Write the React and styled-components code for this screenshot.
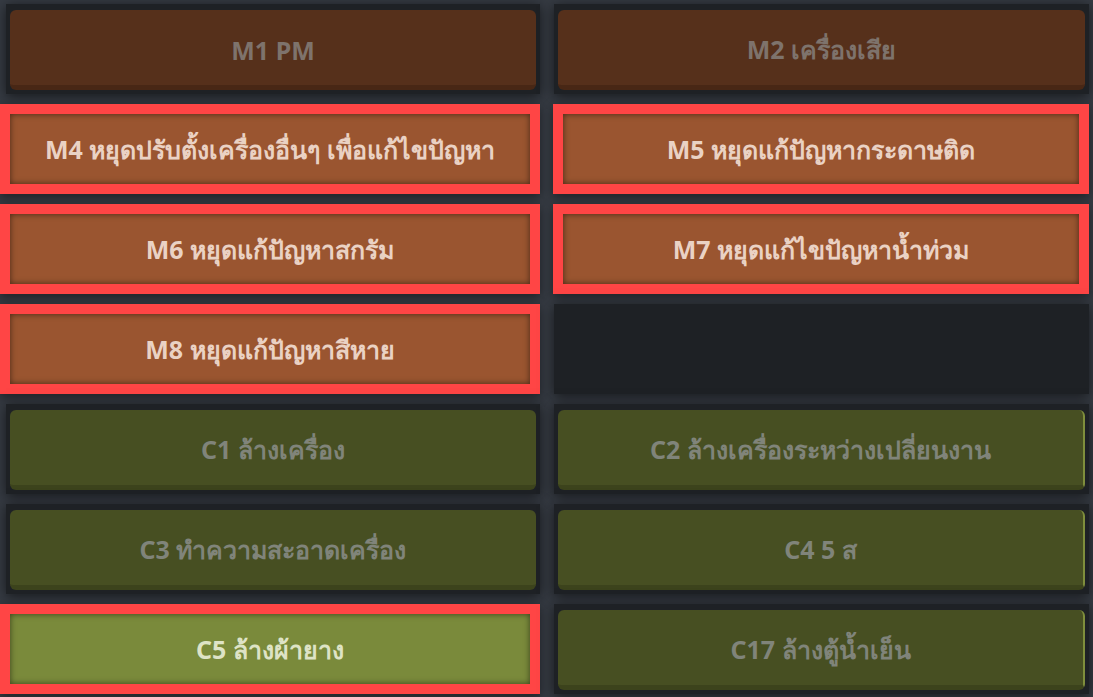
import React from 'react';
import styled, { createGlobalStyle } from 'styled-components';

const GlobalStyle = createGlobalStyle`
  html, body {
    margin: 0;
    padding: 0;
    background: #363b43;
  }
  body {
    font-family: "Noto Sans", "Open Sans", "DejaVu Sans", sans-serif;
    overflow: hidden;
  }
`;

const tasks = [
  { code: 'M1 PM', kind: 'm' },
  { code: 'M2 เครื่องเสีย', kind: 'm' },
  { code: 'M4 หยุดปรับตั้งเครื่องอื่นๆ เพื่อแก้ไขปัญหา', kind: 'm', on: true },
  { code: 'M5 หยุดแก้ปัญหากระดาษติด', kind: 'm', on: true },
  { code: 'M6 หยุดแก้ปัญหาสกรัม', kind: 'm', on: true },
  { code: 'M7 หยุดแก้ไขปัญหาน้ำท่วม', kind: 'm', on: true },
  { code: 'M8 หยุดแก้ปัญหาสีหาย', kind: 'm', on: true },
  null,
  { code: 'C1 ล้างเครื่อง', kind: 'c' },
  { code: 'C2 ล้างเครื่องระหว่างเปลี่ยนงาน', kind: 'c' },
  { code: 'C3 ทำความสะอาดเครื่อง', kind: 'c' },
  { code: 'C4 5 ส', kind: 'c' },
  { code: 'C5 ล้างผ้ายาง', kind: 'c', on: true },
  { code: 'C17 ล้างตู้น้ำเย็น', kind: 'c' },
];

const palette = {
  m: { idle: '#56301b', edge: '#482715', idleText: '#7e736c', hot: '#9a5530', hotText: '#ead2c4' },
  c: { idle: '#474f22', edge: '#3c431c', idleText: '#80847a', hot: '#7a8a3b', hotText: '#dee3c6' },
};

export default function App() {
  return (
    <>
      <GlobalStyle />
      <Board>
        {tasks.map((t, i) => {
          const right = i % 2 === 1;
          if (!t) return <Frame key={i} $right={right} />;
          const c = palette[t.kind];
          if (t.on) {
            return (
              <Picked key={i} $right={right} $bg={c.hot} $fg={c.hotText}>
                {t.code}
              </Picked>
            );
          }
          return (
            <Frame key={i} $right={right}>
              <TaskButton $bg={c.idle} $edge={c.edge} $fg={c.idleText} $lip={right && t.kind === 'c'}>
                {t.code}
              </TaskButton>
            </Frame>
          );
        })}
      </Board>
    </>
  );
}

const Board = styled.div`
  display: grid;
  grid-template-columns: 540px 539px;
  grid-auto-rows: 100px;
  column-gap: 10px;
  padding-top: 4px;
  height: 697px;
  box-sizing: border-box;
`;

const Frame = styled.div`
  height: 90px;
  box-sizing: border-box;
  margin-left: ${p => (p.$right ? '4px' : '6px')};
  padding: 6px 4px 4px 4px;
  background: #1e2125;
  box-shadow: 0 2px 12px rgba(0, 0, 0, 0.6);
`;

const Label = styled.div`
  display: flex;
  align-items: center;
  justify-content: center;
  font-size: 25px;
  font-weight: 700;
  white-space: nowrap;
  color: ${p => p.$fg};
  background: ${p => p.$bg};
`;

const TaskButton = styled(Label)`
  height: 100%;
  box-sizing: border-box;
  border-radius: 6px;
  border-bottom: 5px solid ${p => p.$edge};
  border-right: ${p => (p.$lip ? '2px solid #7f8e3c' : 'none')};
  padding-top: 4px;
`;

const Picked = styled(Label)`
  height: 90px;
  box-sizing: border-box;
  margin-left: ${p => (p.$right ? '3px' : '0')};
  padding-top: 2px;
  border: 10px solid #ff4545;
  box-shadow: inset 0 0 6px rgba(0, 0, 0, 0.55), 0 3px 10px rgba(0, 0, 0, 0.45);
`;
